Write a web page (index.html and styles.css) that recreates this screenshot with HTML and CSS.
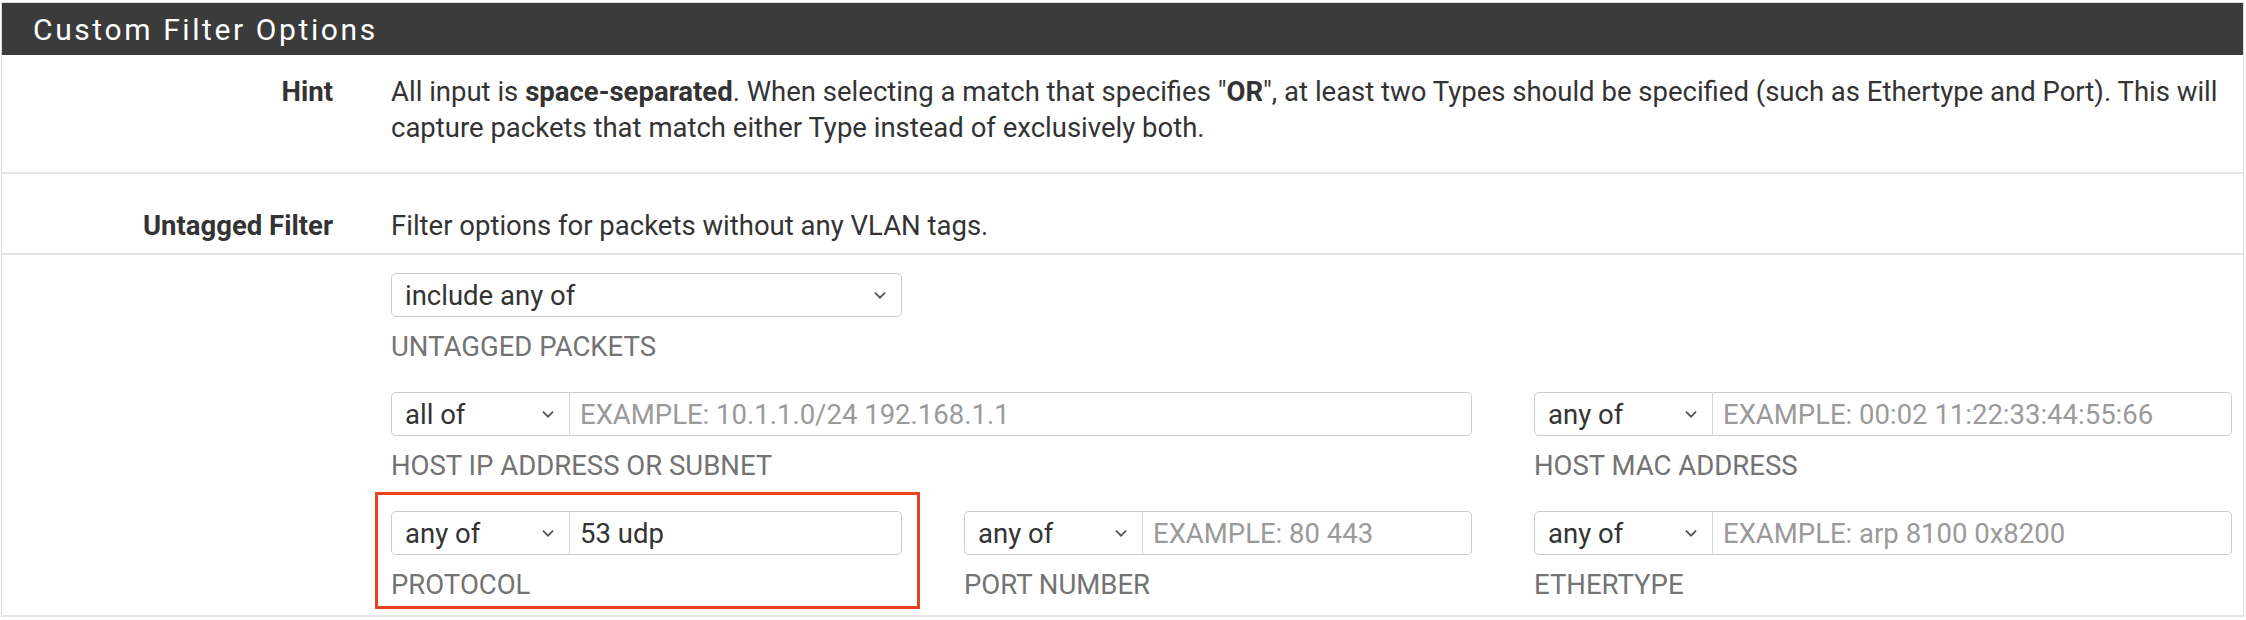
FILE: index.html
```html
<!DOCTYPE html>
<html>
<head>
<meta charset="utf-8">
<link rel="stylesheet" href="styles.css">
</head>
<body>
<div class="panel">
  <div class="panel-heading"><h2 class="panel-title">Custom Filter Options</h2></div>
  <div class="panel-body">
    <div class="form-row row-hint">
      <div class="row-label">Hint</div>
      <div class="row-value hint-text">All input is <b>space-separated</b>. When selecting a match that specifies "<b>OR</b>", at least two Types should be specified (such as Ethertype and Port). This will capture packets that match either Type instead of exclusively both.</div>
    </div>
    <div class="form-row row-untagged">
      <div class="row-label">Untagged Filter</div>
      <div class="row-value">Filter options for packets without any VLAN tags.</div>
    </div>
    <div class="form-row row-fields">
      <div class="row-label"></div>
      <div class="fields">
        <div class="field f-untagged">
          <div class="select full"><span>include any of</span><svg class="chev" viewBox="0 0 12 8"><path d="M1.5 1.5 L6 6 L10.5 1.5"/></svg></div>
          <div class="help">UNTAGGED PACKETS</div>
        </div>
        <div class="field f-host">
          <div class="group">
            <div class="select"><span>all of</span><svg class="chev" viewBox="0 0 12 8"><path d="M1.5 1.5 L6 6 L10.5 1.5"/></svg></div>
            <input class="input" type="text" placeholder="EXAMPLE: 10.1.1.0/24 192.168.1.1">
          </div>
          <div class="help">HOST IP ADDRESS OR SUBNET</div>
        </div>
        <div class="field f-mac">
          <div class="group">
            <div class="select"><span>any of</span><svg class="chev" viewBox="0 0 12 8"><path d="M1.5 1.5 L6 6 L10.5 1.5"/></svg></div>
            <input class="input" type="text" placeholder="EXAMPLE: 00:02 11:22:33:44:55:66">
          </div>
          <div class="help">HOST MAC ADDRESS</div>
        </div>
        <div class="field f-proto highlighted">
          <div class="group">
            <div class="select"><span>any of</span><svg class="chev" viewBox="0 0 12 8"><path d="M1.5 1.5 L6 6 L10.5 1.5"/></svg></div>
            <input class="input" type="text" value="53 udp">
          </div>
          <div class="help">PROTOCOL</div>
        </div>
        <div class="field f-port">
          <div class="group">
            <div class="select"><span>any of</span><svg class="chev" viewBox="0 0 12 8"><path d="M1.5 1.5 L6 6 L10.5 1.5"/></svg></div>
            <input class="input" type="text" placeholder="EXAMPLE: 80 443">
          </div>
          <div class="help">PORT NUMBER</div>
        </div>
        <div class="field f-ether">
          <div class="group">
            <div class="select"><span>any of</span><svg class="chev" viewBox="0 0 12 8"><path d="M1.5 1.5 L6 6 L10.5 1.5"/></svg></div>
            <input class="input" type="text" placeholder="EXAMPLE: arp 8100 0x8200">
          </div>
          <div class="help">ETHERTYPE</div>
        </div>
      </div>
    </div>
  </div>
</div>
</body>
</html>
```

FILE: styles.css
```css
html, body {
  margin: 0;
  padding: 0;
  background: #ffffff;
}
body {
  font-family: Roboto, "Liberation Sans", sans-serif;
  font-size: 27.5px;
  color: #333333;
}
.panel {
  margin: 2px 2px 0 1px;
  border: 1px solid #dddddd;
  border-bottom: none;
  background: #ffffff;
}
.panel-heading {
  background: #3b3b3b;
  height: 52px;
  display: flex;
  align-items: center;
  padding-left: 31px;
}
.panel-title {
  margin: 0;
  font-size: 30px;
  font-weight: 400;
  letter-spacing: 2.6px;
  color: #ffffff;
}
.form-row {
  display: flex;
  border-bottom: 2px solid #e4e4e4;
}
.row-label {
  width: 331px;
  flex: none;
  text-align: right;
  font-weight: 700;
  color: #333333;
  line-height: 36px;
}
.row-value {
  margin-left: 58px;
  margin-right: 10px;
  flex: 1;
  line-height: 36px;
}
.row-hint {
  padding: 19px 0 26px;
}
.row-untagged {
  padding: 34px 0 9px;
}
.row-fields {
  padding: 18px 0 12px;
}
.fields {
  margin-left: 58px;
  flex: 1;
  margin-right: 11px;
  display: grid;
  grid-template-columns: 511px 508px 1fr;
  column-gap: 62px;
  row-gap: 27px;
}
.f-untagged { grid-column: 1; grid-row: 1; }
.f-host { grid-column: 1 / 3; grid-row: 2; }
.f-mac { grid-column: 3; grid-row: 2; }
.f-proto { grid-column: 1; grid-row: 3; }
.f-port { grid-column: 2; grid-row: 3; }
.f-ether { grid-column: 3; grid-row: 3; }
.field {
  display: flex;
  flex-direction: column;
}
.group {
  display: flex;
  height: 44px;
}
.select {
  box-sizing: border-box;
  height: 44px;
  width: 179px;
  flex: none;
  display: flex;
  align-items: center;
  justify-content: space-between;
  padding: 0 14px 0 13px;
  border: 1px solid #cccccc;
  border-radius: 5px 0 0 5px;
  background: #ffffff;
  color: #333333;
  font-size: 27.5px;
}
.select.full {
  width: 100%;
  border-radius: 5px;
}
.chev {
  width: 14px;
  height: 9px;
  fill: none;
  stroke: #555555;
  stroke-width: 1.6;
}
.input {
  box-sizing: border-box;
  flex: 1;
  min-width: 0;
  height: 44px;
  margin: 0 0 0 -1px;
  border: 1px solid #cccccc;
  border-left: 1px solid #d6d6d6;
  border-radius: 0 5px 5px 0;
  padding: 0 10px;
  font-family: Roboto, "Liberation Sans", sans-serif;
  font-size: 27.5px;
  color: #333333;
  background: #ffffff;
  outline: none;
}
.input::placeholder {
  color: #9a9a9a;
  opacity: 1;
}
.help {
  margin-top: 12px;
  line-height: 36px;
  color: #737373;
  font-size: 27.5px;
}
.highlighted {
  position: relative;
}
.highlighted::after {
  content: "";
  position: absolute;
  left: -16px;
  right: -18px;
  top: -19px;
  bottom: -6px;
  border: 3px solid #e8411e;
  pointer-events: none;
}
```
